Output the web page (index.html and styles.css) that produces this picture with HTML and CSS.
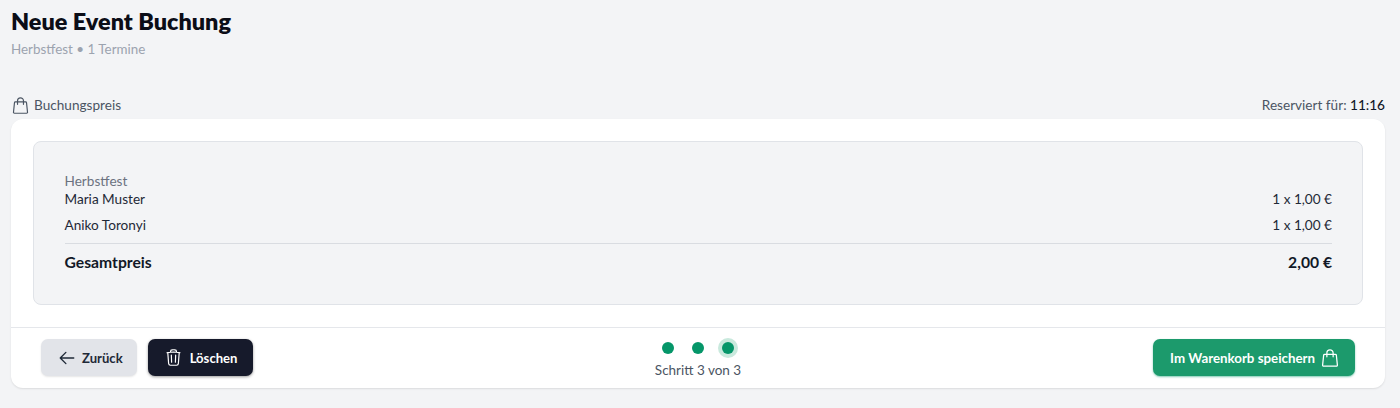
FILE: index.html
```html
<!DOCTYPE html>
<html lang="de">
<head>
    <meta charset="UTF-8">
    <meta name="viewport" content="width=device-width, initial-scale=1.0">
    <title>Neue Event Buchung</title>
    <link rel="stylesheet" href="styles.css">
</head>
<body>
    <header class="page-head">
        <h1>Neue Event Buchung</h1>
        <p>Herbstfest • 1 Termine</p>
    </header>

    <div class="card-label">
        <span class="label-left">
            <svg class="icon" viewBox="0 0 24 24"><path d="M15.75 10.5V6a3.75 3.75 0 1 0-7.5 0v4.5m11.356-1.993 1.263 12c.07.665-.45 1.243-1.119 1.243H4.25a1.125 1.125 0 0 1-1.12-1.243l1.264-12A1.125 1.125 0 0 1 5.513 7.5h12.974c.576 0 1.059.435 1.119 1.007Z"/></svg>
            Buchungspreis
        </span>
        <span>Reserviert für: <b>11:16</b></span>
    </div>

    <main class="card">
        <section class="summary">
            <div class="event">Herbstfest</div>
            <div class="row first"><span>Maria Muster</span><span>1 x 1,00 €</span></div>
            <div class="row"><span>Aniko Toronyi</span><span>1 x 1,00 €</span></div>
            <div class="total"><span>Gesamtpreis</span><span>2,00 €</span></div>
        </section>

        <footer class="actions">
            <div class="actions-left">
                <button class="btn btn-back">
                    <svg class="icon" viewBox="0 0 24 24"><path d="M10.5 19.5 3 12m0 0 7.5-7.5M3 12h18"/></svg>
                    Zurück
                </button>
                <button class="btn btn-delete">
                    <svg class="icon" viewBox="0 0 24 24"><path d="m14.74 9-.346 9m-4.788 0L9.26 9m9.968-3.21c.342.052.682.107 1.022.166m-1.022-.165L18.16 19.673a2.25 2.25 0 0 1-2.244 2.077H8.084a2.25 2.25 0 0 1-2.244-2.077L4.772 5.79m14.456 0a48.108 48.108 0 0 0-3.478-.397m-12 .562c.34-.059.68-.114 1.022-.165m0 0a48.11 48.11 0 0 1 3.478-.397m7.5 0v-.916c0-1.18-.91-2.164-2.09-2.201a51.964 51.964 0 0 0-3.32 0c-1.18.037-2.09 1.022-2.09 2.201v.916m7.5 0a48.667 48.667 0 0 0-7.5 0"/></svg>
                    Löschen
                </button>
            </div>
            <div class="steps">
                <div class="dots">
                    <span class="dot"></span>
                    <span class="dot"></span>
                    <span class="dot current"></span>
                </div>
                <div class="step-text">Schritt 3 von 3</div>
            </div>
            <div class="actions-right">
                <button class="btn btn-save">
                    Im Warenkorb speichern
                    <svg class="icon" viewBox="0 0 24 24"><path d="M15.75 10.5V6a3.75 3.75 0 1 0-7.5 0v4.5m11.356-1.993 1.263 12c.07.665-.45 1.243-1.119 1.243H4.25a1.125 1.125 0 0 1-1.12-1.243l1.264-12A1.125 1.125 0 0 1 5.513 7.5h12.974c.576 0 1.059.435 1.119 1.007Z"/></svg>
                </button>
            </div>
        </footer>
    </main>
</body>
</html>
```

FILE: styles.css
```css
* {
    box-sizing: border-box;
}

body {
    margin: 0;
    padding: 6px 15px 20px 11px;
    background: #f3f4f6;
    color: #111827;
    font-family: "Lato", "Noto Sans", sans-serif;
    font-size: 13.6px;
}

.icon {
    width: 18px;
    height: 18px;
    flex: none;
    fill: none;
    stroke: currentColor;
    stroke-width: 1.5;
    stroke-linecap: round;
    stroke-linejoin: round;
}

.page-head {
    height: 87px;

    h1 {
        margin: 0;
        font-size: 23.4px;
        line-height: 30px;
        font-weight: 800;
        color: #0b0d17;
    }

    p {
        margin: 3px 0 0;
        font-size: 13.4px;
        line-height: 20px;
        color: #9ca3af;
    }
}

.card-label {
    display: flex;
    justify-content: space-between;
    align-items: center;
    height: 26px;
    padding-bottom: 2px;
    color: #4b5563;

    b {
        font-weight: 500;
        color: #111827;
    }
}

.label-left {
    display: flex;
    align-items: center;
    gap: 4px;

    .icon {
        width: 19px;
        height: 19px;
    }
}

.card {
    background: #fff;
    border-radius: 12px;
    box-shadow: 0 1px 2px rgba(0, 0, 0, 0.1);
    height: 269px;
}

.summary {
    margin: 0 22px;
    position: relative;
    top: 22px;
    height: 164px;
    padding: 30px 30px 0 30.5px;
    background: #f3f4f6;
    border: 1px solid #e0e3e8;
    border-radius: 8px;
    color: #1f2937;
}

.event {
    line-height: 18px;
    color: #6b7280;
}

.row {
    display: flex;
    justify-content: space-between;
    line-height: 18px;
    margin-top: 8px;

    &.first {
        margin-top: 0;
    }
}

.total {
    display: flex;
    justify-content: space-between;
    margin-top: 9px;
    padding-top: 7px;
    border-top: 1px solid #d9dce1;
    font-size: 15.7px;
    font-weight: 700;
    line-height: 22px;
    color: #111827;
}

.actions {
    display: grid;
    grid-template-columns: 1fr auto 1fr;
    align-items: start;
    height: 61px;
    margin-top: 44px;
    padding: 11px 30px 0;
    border-top: 1px solid #e5e7eb;
}

.actions-left {
    display: flex;
    gap: 11px;
}

.actions-right {
    display: flex;
    justify-content: flex-end;
}

.btn {
    display: flex;
    align-items: center;
    height: 37px;
    border: 0;
    border-radius: 7px;
    font-family: inherit;
    font-size: 13.1px;
    font-weight: 700;
}

.btn-back {
    gap: 6px;
    padding: 0 14px 0 17px;
    background: #e2e4e9;
    color: #1f2937;
    box-shadow: 0 1px 2px rgba(0, 0, 0, 0.1);

    .icon {
        stroke-width: 1.8;
    }
}

.btn-delete {
    gap: 7px;
    padding: 0 16px;
    background: #161a2b;
    color: #fff;
    box-shadow: 0 1px 3px rgba(0, 0, 0, 0.4);

    .icon {
        width: 19px;
        height: 19px;
    }
}

.btn-save {
    gap: 5px;
    padding: 0 15px 0 17px;
    background: #1c9a6c;
    color: #fff;
    font-size: 13.3px;
    box-shadow: 0 1px 2px rgba(5, 150, 105, 0.5);

    .icon {
        width: 20px;
        height: 20px;
    }
}

.steps {
    display: flex;
    flex-direction: column;
    align-items: center;
    gap: 7px;
    padding-top: 3px;
    color: #4b5563;
    font-size: 13.5px;
}

.dots {
    display: flex;
    gap: 18px;
}

.dot {
    width: 12px;
    height: 12px;
    border-radius: 50%;
    background: #059669;

    &.current {
        box-shadow: 0 0 0 4px #c9e9dd;
    }
}

.step-text {
    line-height: 18px;
}
```
